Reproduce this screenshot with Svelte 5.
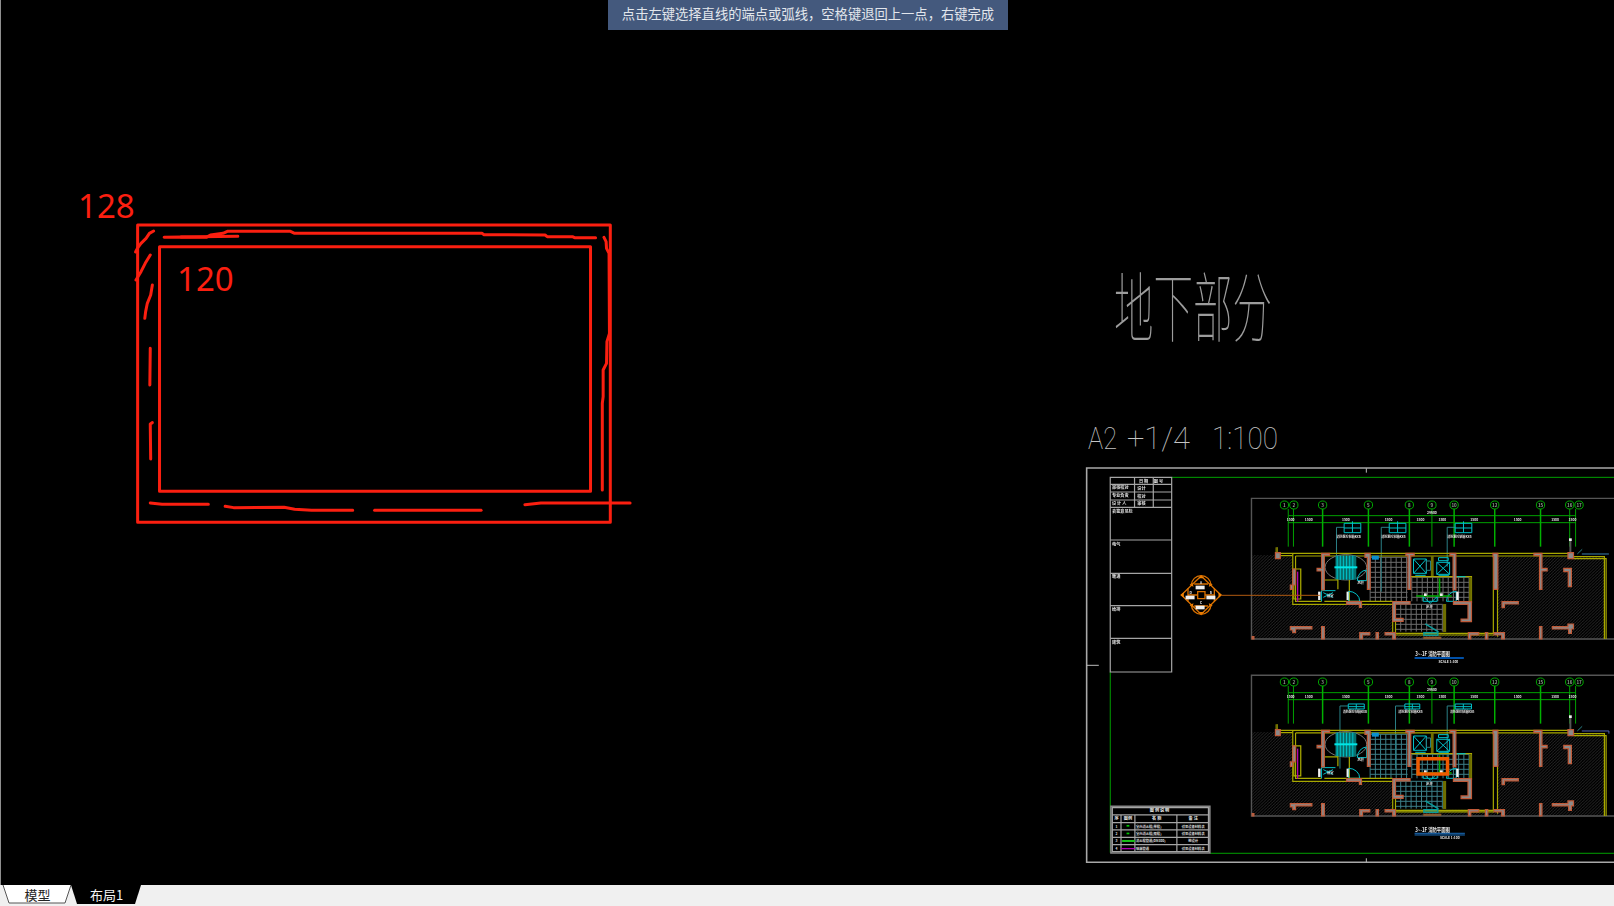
<script>
  const freehand = [
    'M365,183 L355,190 347,205 335,220 328,232 322,246',
    'M357,255 L345,280 335,305 323,330',
    'M362,345 L358,375 350,400 346,425 344,445',
    'M357,535 L356,645',
    'M362,758 L357,762 358,867',
    'M390,202 L430,201 490,202 500,195 530,190 540,184 690,184 700,190 1145,190 1150,194 1295,195 1300,200 1360,200 1365,203 1415,203',
    'M430,201 L565,199',
    'M1435,202 L1440,215 1441,235 1447,250 1448,490 1442,515 1441,580 1433,600 1433,680 1431,700 1431,960',
    'M357,999 L385,1003 495,1003',
    'M535,1009 L555,1013 675,1012 700,1018 740,1021 838,1021',
    'M890,1021 L1143,1021',
    'M1247,1004 L1285,999 1497,999'
  ];

  const bubbles = [[618,'1'],[645,'2'],[728,'3'],[860,'5'],[978,'8'],[1043,'9'],[1107,'10'],[1224,'12'],[1356,'15'],[1440,'16'],[1467,'17']];
  const dims = [636,688,795,918,1010,1073,1165,1290,1398,1448];

  const walls = [
    'M592,278H606V296H592Z',
    'M725,280H748V286H733V390H725V333H712V325H725Z',
    'M850,280H865V388H857V292H850Z',
    'M968,280H992V287H982V388H974V287H968Z',
    'M1095,280H1112V390H1104V287H1095Z',
    'M1219,280H1233V388H1221V290H1219Z',
    'M1337,280H1360V325H1375V333H1360V388H1353V287H1337Z',
    'M1435,278H1451V296H1435Z',
    'M1423,325H1445V380H1436V335H1423Z',
    'M642,327H650V375H642V388H635V375H642Z',
    'M797,425H840V442H834V433H797Z',
    'M930,425H980V432H938V475H960V484H930Z',
    'M1105,425H1157V485H1127V477H1147V433H1105Z',
    'M1245,425H1292V432H1252V443H1245Z',
    'M635,500H697V507H650V518H642V510H635Z',
    'M725,500H733V537H725Z',
    'M835,518H864V525H843V537H835Z',
    'M882,518H889V537H882Z',
    'M908,518H938V537H930V525H908Z',
    'M1148,518H1178V525H1155V537H1148Z',
    'M1197,518H1204V537H1197Z',
    'M1222,518H1252V537H1244V525H1222Z',
    'M1353,500H1360V537H1353Z',
    'M1390,500H1435V492H1451V507H1445V520H1437V507H1390Z',
    'M525,530H530V537H525Z'
  ];

  const range = (a, b, s) => {
    const out = [];
    for (let v = a; v <= b; v += s) out.push(v);
    return out;
  };

  const tiles = [
    { x: 865, y: 292, w: 108, h: 133 },
    { x: 985, y: 352, w: 165, h: 72 },
    { x: 938, y: 433, w: 136, h: 82 }
  ];

  const blockRows = [73, 96, 120, 142, 240, 340, 437, 535];
  const blockLabels = [
    [121, 87, '审核校对'], [121, 112, '专业负责'], [121, 136, '设 计 人'],
    [121, 158, '会签意见栏'], [121, 257, '电气'], [121, 355, '暖通'],
    [121, 454, '给排'], [121, 552, '建筑']
  ];
  const legendRows = [
    ['1', '室内消火栓(单栓)', '详见设备材料表', 'dot'],
    ['2', '室内消火栓(双栓)', '详见设备材料表', 'dot'],
    ['3', '消火栓管道(DN100)', '按设计', 'green'],
    ['4', '喷淋管道', '详见设备材料表', 'purple']
  ];
</script>

{#snippet plan(alt)}
  <rect class="black" x="523" y="115" width="1100" height="422" />
  <rect class="hatch" x="525" y="285" width="1016" height="251" />
  <path class="black" d="M608,279H1232V518H930V433H640V290H608Z" />
  <rect class="black" x="1232" y="279" width="320" height="11" />

  {#each tiles as t}
    {#each range(t.x, t.x + t.w, 15) as x}
      <line class={alt ? 'tile alt' : 'tile'} x1={x} y1={t.y} x2={x} y2={t.y + t.h} />
    {/each}
    {#each range(t.y, t.y + t.h, 15) as y}
      <line class={alt ? 'tile alt' : 'tile'} x1={t.x} y1={y} x2={t.x + t.w} y2={y} />
    {/each}
  {/each}

  <rect class="frame" x="523" y="115" width="1100" height="422" />

  <line class="green" x1="630" y1="167" x2="1458" y2="167" />
  <line class="green" x1="628" y1="188" x2="1458" y2="188" />
  {#each bubbles as [x, n]}
    <line class="green" class:heavy={['3','5','8','10','12','15'].includes(n)} x1={x + (n === '1' ? 11 : n === '17' ? -10 : n === '2' ? -1 : 0)} y1="147" x2={x + (n === '1' ? 11 : n === '17' ? -10 : n === '2' ? -1 : 0)} y2="260" />
    <ellipse class="bubble" cx={x} cy="135" rx="12" ry="12" />
    <text class="mini" x={x} y="141" text-anchor="middle">{n}</text>
  {/each}
  {#each dims as x}
    <text class="mini solid tiny" x={x} y="184" text-anchor="middle">1500</text>
  {/each}
  <text class="mini solid tiny" x="1043" y="162" text-anchor="middle">29600</text>

  {#each alt ? [[778,802,848,207],[938,965,1008,207],[1087,1110,1157,207]] : [[768,790,838,202],[897,920,968,202],[1087,1110,1158,202]] as [lead, a, b, y]}
    <path class="teal" d="M{a},{y}H{lead}V{alt ? 395 : lead === 897 ? 395 : 320}" />
    <rect class="cyan" x={a} y={y - (alt ? 6 : 12)} width={b - a} height={alt ? 15 : 28} />
    <line class="cyan" x1={a} y1={y + 2} x2={b} y2={y + 2} />
    <line class="cyan" x1={(a + b) / 2} y1={y - (alt ? 6 : 18)} x2={(a + b) / 2} y2={y + (alt ? 9 : 16)} />
    <text class="mini solid tiny" x={lead + (alt ? 8 : 0)} y={alt ? 229 : 233} textLength="70" lengthAdjust="spacingAndGlyphs">消防泵控制箱KXB</text>
  {/each}

  <path class="yellow" d="M597,262V280M597,280H1440M606,287H640M642,280V433H930M650,288V424H725M650,288H1440M733,424H930" />
  <path class="yellow" d="M930,433V520H1225M938,475V525H1222M1220,290V518M1232,390V530M1445,290H1540V537M1451,296H1545V537M980,350H1157V430M1105,425H1157" />
  <rect class="olive" x="1040" y="288" width="8" height="60" />
  <rect class="olive" x="1075" y="432" width="9" height="84" />
  <rect class="olive" x="1150" y="352" width="8" height="72" />
  <rect class="olive" x="592" y="262" width="6" height="16" />
  <path class={alt ? 'blue purpleish' : 'blue'} d={alt ? 'M1475,282H1553V290' : 'M1475,282H1553'} />
  <line class="grayline" x1="1442" y1="240" x2="1442" y2="278" />
  <rect class="whitebox" x="1438" y="235" width="8" height="8" />
  <line class="teal" x1="1462" y1="282" x2="1476" y2="268" />

  <rect class="yellowbox" x="645" y="327" width="20" height="90" />
  <line class="purple" x1="656" y1="335" x2="656" y2="425" />

  <ellipse class="gray-arc" cx="795" cy="322" rx="60" ry="38" />
  <rect class="stair" x="765" y="287" width="60" height="72" />
  {#each range(770, 820, 9) as x}
    <line class="cyan" x1={x} y1="287" x2={x} y2="359" />
  {/each}
  <line class="cyanbar" x1="762" y1="322" x2="828" y2="322" />
  <path class="yellow" d="M733,360H772V388M805,360V424" />
  <path class="cyan" d="M855,330V362H828M855,330A28,32 0 0,0 828,362" />
  <path class="cyan" d="M803,424V394A32,30 0 0,1 835,424Z" />
  <path class="cyan" d="M725,424V392H765M730,398L758,412M758,398L730,412" />
  <rect class="cyan" x="990" y="297" width="37" height="43" />
  <path class="cyan" d="M990,297L1027,340M1027,297L990,340" />
  <rect class="teal" x="1027" y="303" width="12" height="28" />
  <rect class="cyan" x="1057" y="307" width="37" height="36" />
  <path class="cyan" d="M1057,307L1094,343M1094,307L1057,343M1062,293H1090V302H1062Z" />
  <path class="cyan" d="M995,346H1025M1062,346H1092M1115,350H1140" />
  <path class="cyan" d="M1085,424A28,30 0 0,1 1113,394V424Z" />
  <path class="cyan" d="M1018,424H1058V410L1038,430L1018,410Z" />
  <path class="tealbright" d="M1024,492L1062,516M1020,518H1060V526H1020Z" />
  <path class="green heavy" d="M998,408H1100M1065,355V405" />
  <rect class="bluebox" x="870" y="287" width="20" height="12" />

  <rect class="whitebox" x="715" y="395" width="7" height="25" />
  <rect class="whitebox" x="797" y="395" width="6" height="25" />
  <rect class="whitebox" x="1113" y="395" width="7" height="25" />
  <rect class="whitebox" x="1020" y="400" width="8" height="8" />
  <rect class="whitebox" x="1066" y="400" width="8" height="8" />

  {#each walls as d}
    <path class="wall" {d} />
  {/each}

  <text class="mini solid tiny" x="750" y="410" text-anchor="middle">前室</text>
  <text class="mini solid tiny" x="838" y="373" text-anchor="middle">风井</text>
  <text class="mini solid tiny" x="1036" y="445" text-anchor="middle">水井</text>
  <rect class="sand" x="1018" y="530" width="52" height="7" />

  {#if alt}
    <rect class="highlight" x="1003" y="365" width="85" height="46" />
  {/if}

  <text class="plantitle" x="995" y={alt ? 586 : 588} textLength="100" lengthAdjust="spacingAndGlyphs">3~-1F 消防平面图</text>
  {#if alt}
    <line class="bluethin" x1="993" y1="589" x2="1138" y2="589" />
    <line class="bluethin" x1="993" y1="594" x2="1138" y2="594" />
    <text class="mini solid tiny" x="1066" y="606">SCALE 1:100</text>
  {:else}
    <line class="bluebar" x1="993" y1="594" x2="1135" y2="594" />
    <text class="mini solid tiny" x="1062" y="608">SCALE 1:100</text>
  {/if}
{/snippet}

<div class="app">
  <main class="canvas">
    <svg class="cad" viewBox="0 0 1613 885" width="1613" height="885" aria-label="CAD drawing">
      <defs>
        <pattern id="hatchfill" patternUnits="userSpaceOnUse" width="9" height="9">
          <path class="hatchline" d="M0,9L9,0" />
        </pattern>
      </defs>

      <g transform="translate(-1 170) scale(.4209 .3333)">
        <rect class="red" x="327" y="165" width="1123" height="892" />
        <rect class="red" x="379" y="230" width="1024" height="734" />
        {#each freehand as d}
          <path class="red" {d} />
        {/each}
      </g>
      <text class="dim" x="77" y="217.5">128</text>
      <text class="dim" x="176" y="291">120</text>

      <text class="cad-title" transform="translate(1113 336) scale(.52 1)">地下部分</text>
      <text class="cad-scale" x="1087" y="449" textLength="29" lengthAdjust="spacingAndGlyphs">A2</text>
      <text class="cad-scale" x="1126" y="449" textLength="63" lengthAdjust="spacingAndGlyphs">+1/4</text>
      <text class="cad-scale" x="1211" y="449" textLength="66" lengthAdjust="spacingAndGlyphs">1:100</text>

      <g class="soft" transform="translate(1069 460) scale(.347 .3333)">
        <path class="sheet" d="M1600,24H48V1207H1600" />
        <path class="sheet thin" d="M854,25V38M854,1195V1207M48,616H83" />
        <path class="green" d="M294,52H1600M116,636V1178M404,1180H1600" />

        <rect class="sheetcell" x="116" y="52" width="177" height="584" />
        {#each blockRows as y}
          <line class="sheetcell" x1="116" y1={y} x2="293" y2={y} />
        {/each}
        <path class="sheetcell" d="M186,52V142M240,52V142" />
        <text class="mini solid" x="212" y="68" text-anchor="middle">日 期</text>
        <text class="mini solid" x="255" y="68" text-anchor="middle">图 号</text>
        <text class="mini solid" x="206" y="90" text-anchor="middle">设计</text>
        <text class="mini solid" x="206" y="115" text-anchor="middle">校对</text>
        <text class="mini solid" x="206" y="136" text-anchor="middle">审核</text>
        {#each blockLabels as [x, y, t]}
          <text class="mini solid" {x} {y}>{t}</text>
        {/each}

        <g>{@render plan(false)}</g>
        <g transform="translate(0 531)">{@render plan(true)}</g>

        <g>
          <polygon class="orange" points="378,348 435,405 378,463 321,405" />
          <polygon class="orangefill" points="378,345 386,355 370,355" />
          <polygon class="orangefill" points="378,466 386,456 370,456" />
          <polygon class="orangefill" points="318,405 328,397 328,413" />
          <polygon class="orangefill" points="438,405 428,397 428,413" />
          <polygon class="orangefill" points="345,375 352,367 356,380" />
          <polygon class="orangefill" points="411,375 404,367 400,380" />
          <polygon class="orangefill" points="345,435 352,443 356,430" />
          <polygon class="orangefill" points="411,435 404,443 400,430" />
          <rect class="orange" x="368" y="395" width="21" height="21" />
          <path class="orange" d="M350,375A28,28 0 0,1 406,375M350,435A28,28 0 0,0 406,435M340,385V425M416,385V425M358,372H398M358,438H398M340,405H368M389,405H416" />
          <rect class="whitebox" x="362" y="377" width="26" height="11" />
          <rect class="whitebox" x="362" y="437" width="26" height="11" />
          <rect class="whitebox" x="333" y="407" width="26" height="11" />
          <rect class="whitebox" x="393" y="407" width="26" height="11" />
          <text class="mini solid tiny" x="378" y="372" text-anchor="middle">A</text>
          <text class="mini solid tiny" x="406" y="402" text-anchor="middle">B</text>
          <text class="mini solid tiny" x="378" y="432" text-anchor="middle">C</text>
          <text class="mini solid tiny" x="348" y="402" text-anchor="middle">D</text>
          <line class="orangeline" x1="437" y1="406" x2="720" y2="406" />
        </g>

        <g transform="translate(0 600)">
          <rect class="black" x="117" y="438" width="287" height="142" />
          <rect class="sheetcell heavygray" x="118" y="439" width="285" height="140" />
          <rect class="sheetcell" x="122" y="443" width="277" height="132" />
          {#each [465, 488, 510, 532, 554] as y}
            <line class="sheetcell" x1="122" y1={y} x2="399" y2={y} />
          {/each}
          <path class="sheetcell" d="M147,465V575M187,465V575M308,465V575" />
          <text class="mini solid" x="258" y="457" text-anchor="middle">图 例 说 明</text>
          <text class="mini solid" x="134" y="481" text-anchor="middle">序</text>
          <text class="mini solid" x="167" y="481" text-anchor="middle">图例</text>
          <text class="mini solid" x="250" y="481" text-anchor="middle">名 称</text>
          <text class="mini solid" x="355" y="481" text-anchor="middle">备 注</text>
          {#each legendRows as row, i}
            <text class="mini solid tiny" x="134" y={503 + i * 22} text-anchor="middle">{row[0]}</text>
            <text class="mini solid tiny" x="190" y={503 + i * 22}>{row[1]}</text>
            <text class="mini solid tiny" x="355" y={503 + i * 22} text-anchor="middle">{row[2]}</text>
            {#if row[3] === 'dot'}
              <rect class="greendot" x="163" y={495 + i * 23} width="8" height="5" />
            {:else if row[3] === 'green'}
              <line class="green thick" x1="150" y1="543" x2="187" y2="543" />
            {:else}
              <line class="purple" x1="147" y1="566" x2="187" y2="566" />
            {/if}
          {/each}
        </g>
      </g>
    </svg>

    <div class="prompt">点击左键选择直线的端点或弧线，空格键退回上一点，右键完成</div>
  </main>

  <footer class="tabs">
    <div class="tab light">
      <svg viewBox="0 0 70 19" width="70" height="19" aria-hidden="true">
        <path class="tabshape" d="M1,0L7,18H63L69,0" />
      </svg>
      <span>模型</span>
    </div>
    <div class="tab dark">
      <svg viewBox="0 0 70 19" width="70" height="19" aria-hidden="true">
        <path d="M0,0H70L64,19H6Z" />
      </svg>
      <span>布局1</span>
    </div>
  </footer>
</div>

<style>
  :global(body) { background: #000; overflow: hidden; }
  .app { width: 1614px; height: 906px; display: flex; flex-direction: column; background: #000; }
  .canvas { position: relative; flex: 1; min-height: 0; border-left: 1px solid #8f8f8f; overflow: hidden; }
  .cad { display: block; }
  .cad path, .cad rect, .cad line, .cad polygon, .cad ellipse { vector-effect: non-scaling-stroke; }
  .soft { filter: blur(0.4px); }

  .red { fill: none; stroke: #fb1f10; stroke-width: 3; stroke-linejoin: round; stroke-linecap: round; }
  .dim { font: 33px "Noto Sans", "Open Sans", sans-serif; fill: #fb1f10; }
  .cad-title { font: 100 76px "Noto Sans CJK SC", sans-serif; fill: #9c9c9c; }
  .cad-scale { font: 100 31px Roboto, "Liberation Sans", sans-serif; fill: #c4c4c4; }

  .black { fill: #000; stroke: none; }
  .hatch { fill: url(#hatchfill); stroke: none; }
  .hatchline { stroke: #6a6a6a; stroke-width: 1; fill: none; }
  .frame { fill: none; stroke: #555; stroke-width: 1.4; }
  .sheet { fill: none; stroke: #a8a8a8; stroke-width: 1.6; }
  .sheet.thin { stroke-width: 1; stroke: #bbb; }
  .sheetcell { fill: none; stroke: #a5a5a5; stroke-width: 1.2; }
  .heavygray { stroke: #888; stroke-width: 1.6; }
  .green { fill: none; stroke: #00a000; stroke-width: 1; }
  .green.heavy { stroke-width: 1.5; stroke: #00b000; }
  .green.thick { stroke: #18c018; stroke-width: 2; }
  .greendot { fill: #00c800; }
  .bubble { fill: #000; stroke: #00a800; stroke-width: 1; }
  .mini { font: 700 13px "Noto Sans CJK SC", "Noto Sans", sans-serif; fill: #8fa08f; }
  .mini.solid { fill: #e8e8e8; font-size: 12px; }
  .mini.tiny { font-size: 9.5px; }
  .plantitle { font: 700 17px "Noto Sans CJK SC", sans-serif; fill: #f0f0f0; }
  .tile { stroke: #6b6b6b; stroke-width: 1; }
  .tile.alt { stroke: #3c7f88; }
  .teal { fill: none; stroke: #2a7f85; stroke-width: 1; }
  .tealbright { fill: none; stroke: #0a9a9a; stroke-width: 1.5; }
  .cyan { fill: none; stroke: #00c0c8; stroke-width: 1; }
  .cyanbar { stroke: #00e6e6; stroke-width: 2; }
  .stair { fill: #06706f; stroke: none; }
  .gray-arc { fill: none; stroke: #777; stroke-width: 1; }
  .yellow { fill: none; stroke: #a8a800; stroke-width: 1.2; }
  .olive { fill: #6e6e00; }
  .yellowbox { fill: none; stroke: #b0b000; stroke-width: 1.2; }
  .purple { stroke: #b000b0; stroke-width: 1.3; }
  .blue { fill: none; stroke: #3a80b0; stroke-width: 1; }
  .purpleish { stroke: #5060b0; }
  .bluebox { fill: #0a90d0; }
  .grayline { stroke: #555; stroke-width: 2; }
  .whitebox { fill: #f0f0f0; }
  .wall { fill: #8a8a8a; stroke: #c05a38; stroke-width: 1.2; }
  .sand { fill: #8a5a30; }
  .highlight { fill: none; stroke: #ee5a00; stroke-width: 3.5; }
  .bluebar { stroke: #0050a8; stroke-width: 2; }
  .bluethin { stroke: #1a70c0; stroke-width: 1; }
  .orange { fill: none; stroke: #d87000; stroke-width: 1.3; }
  .orangefill { fill: #f08000; }
  .orangeline { stroke: #b05a10; stroke-width: 1; }

  .prompt {
    position: absolute;
    top: 0;
    left: 607px;
    width: 400px;
    height: 30px;
    background: #44597d;
    color: #e2e6ec;
    font: 13.3px/28px "Noto Sans CJK SC", serif;
    text-align: center;
    white-space: nowrap;
  }

  .tabs { height: 21px; flex: none; display: flex; background: #f0f0f0; padding-left: 2px; }
  .tab { position: relative; width: 69px; height: 19px; padding-left: 2px; box-sizing: border-box; display: flex; align-items: center; justify-content: center; font: 13px/19px "Noto Sans CJK SC", sans-serif; }
  .tab svg { position: absolute; top: 0; left: 0; }
  .tab span { position: relative; }
  .light { color: #222; }
  .tabshape { fill: #fff; stroke: #555; stroke-width: 1; }
  .dark { color: #f4f4f4; }
  .dark svg path { fill: #000; }
</style>
